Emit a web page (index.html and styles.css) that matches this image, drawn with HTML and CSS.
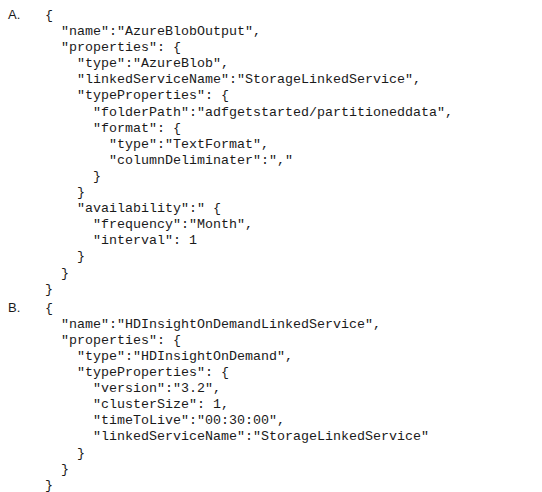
FILE: index.html
```html
<!DOCTYPE html>
<html>
<head>
<meta charset="utf-8">
<link rel="stylesheet" href="styles.css">
</head>
<body>
<div class="options">
<div class="option">
<div class="label">A.</div>
<pre class="code">{
  "name":"AzureBlobOutput",
  "properties": {
    "type":"AzureBlob",
    "linkedServiceName":"StorageLinkedService",
    "typeProperties": {
      "folderPath":"adfgetstarted/partitioneddata",
      "format": {
        "type":"TextFormat",
        "columnDeliminater":","
      }
    }
    "availability":" {
      "frequency":"Month",
      "interval": 1
    }
  }
}</pre>
</div>
<div class="option">
<div class="label">B.</div>
<pre class="code">{
  "name":"HDInsightOnDemandLinkedService",
  "properties": {
    "type":"HDInsightOnDemand",
    "typeProperties": {
      "version":"3.2",
      "clusterSize": 1,
      "timeToLive":"00:30:00",
      "linkedServiceName":"StorageLinkedService"
    }
  }
}</pre>
</div>
</div>
</body>
</html>
```
FILE: styles.css
```css
html, body {
  margin: 0;
  padding: 0;
  background: #ffffff;
}
body {
  padding: 7px 0 0 8px;
  color: #1a1a1a;
}
.options {
  display: flex;
  flex-direction: column;
  gap: 2px;
}
.option {
  display: flex;
  align-items: baseline;
}
.label {
  width: 37px;
  font-family: "Liberation Sans", Arial, sans-serif;
  font-size: 13px;
  line-height: 16px;
}
.code {
  margin: 0;
  font-family: "Liberation Mono", "Courier New", monospace;
  font-size: 13.33px;
  line-height: 16.1px;
}
```
